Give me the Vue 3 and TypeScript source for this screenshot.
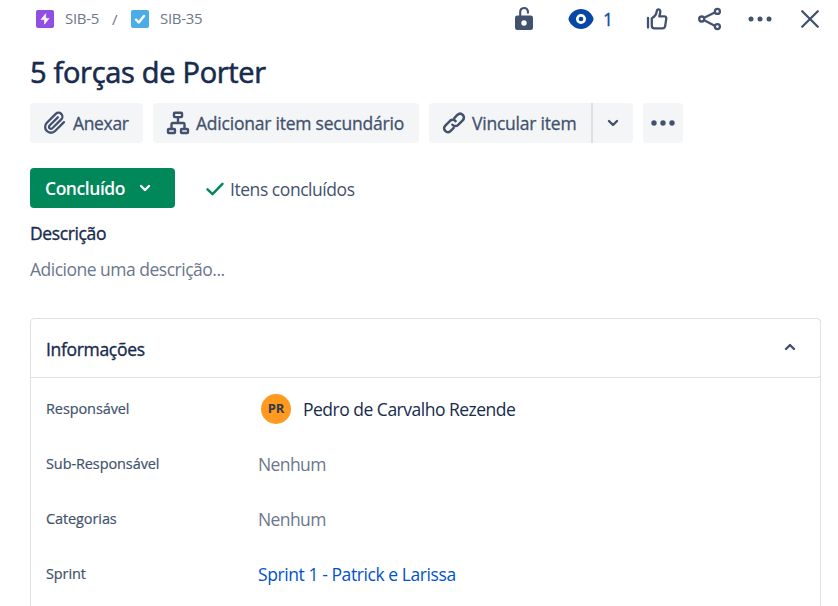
<script setup lang="ts">
import { ref } from 'vue'

interface Field {
  label: string
  value: string
  kind: 'user' | 'empty' | 'link'
}

const open = ref(true)
const fields: Field[] = [
  { label: 'Responsável', value: 'Pedro de Carvalho Rezende', kind: 'user' },
  { label: 'Sub-Responsável', value: 'Nenhum', kind: 'empty' },
  { label: 'Categorias', value: 'Nenhum', kind: 'empty' },
  { label: 'Sprint', value: 'Sprint 1 - Patrick e Larissa', kind: 'link' },
]
</script>

<template>
  <main class="issue">
    <header class="top">
      <nav class="crumbs">
        <svg class="type" viewBox="0 0 18 18"><rect width="18" height="18" rx="2" fill="#904ee2" /><path d="M9.700 3.700 5 9.600h3.500v4.600L13 8.400H9.700z" fill="#fff" stroke="#fff" stroke-width=".6" stroke-linejoin="round" /></svg>
        <a class="key"><span>SIB-5</span></a>
        <span class="slash">/</span>
        <svg class="type" viewBox="0 0 18 18"><rect width="18" height="18" rx="2" fill="#4bade8" /><path d="m5 9.600 2.800 2.900L13 5.900" fill="none" stroke="#fff" stroke-width="2.400" stroke-linecap="round" stroke-linejoin="round" /></svg>
        <a class="key"><span>SIB-35</span></a>
      </nav>
      <div class="tools">
        <svg class="ic lock" viewBox="0 0 30 30"><path d="M11.200 14V7.700a3.900 3.900 0 0 1 7.700-.6v1.600" fill="none" stroke="currentColor" stroke-width="2.100" stroke-linecap="round" /><path fill-rule="evenodd" d="M8.200 11.500h13.600a2.200 2.200 0 0 1 2.200 2.200v10.100a2.200 2.200 0 0 1-2.200 2.200H8.200a2.200 2.200 0 0 1-2.200-2.200v-10.100a2.200 2.200 0 0 1 2.200-2.200zM15 16.300a2.700 2.700 0 1 0 0 5.400 2.700 2.700 0 0 0 0-5.400z" fill="currentColor" /></svg>
        <span class="watch">
          <svg class="ic" viewBox="0 0 30 30"><path d="M15 5c-6 0-10.200 4-12.200 8.400-.5 1.100-.5 2.100 0 3.200C4.800 21 9 25 15 25s10.200-4 12.200-8.400c.5-1.100.5-2.100 0-3.200C25.200 9 21 5 15 5z" fill="currentColor" /><circle cx="15" cy="15" r="3.700" fill="currentColor" stroke="#fff" stroke-width="2.700" /></svg>
          <b>1</b>
        </span>
        <svg class="ic like" viewBox="0 0 30 30"><g fill="none" stroke="currentColor" stroke-width="2.300" stroke-linecap="round" stroke-linejoin="round"><path d="M6 14v9.500" /><path d="M9.800 14.200c2.600-1.200 4.400-3.300 4.900-6.700.2-1.500.8-2.200 1.700-2.200 2 0 2.200 2.300 1.700 4.100l-.8 3h5.200c1.200 0 2 .9 1.800 2l-1.100 7.400c-.2 1.500-1.300 2.500-2.800 2.500h-8c-1.500 0-2.600-1.100-2.600-2.600z" /></g></svg>
        <svg class="ic share" viewBox="0 0 30 30"><g fill="none" stroke="currentColor" stroke-width="2.300"><path d="m9.600 13.600 10.600-5.400M9.600 16.500l10.600 5.400" /><circle cx="6.700" cy="15" r="2.500" /><circle cx="22.400" cy="7.400" r="2.500" /><circle cx="22.400" cy="22.600" r="2.500" /></g></svg>
        <svg class="ic dots" viewBox="0 0 30 30" fill="currentColor"><circle cx="6" cy="15" r="2.500" /><circle cx="15" cy="15" r="2.500" /><circle cx="24" cy="15" r="2.500" /></svg>
        <svg class="ic close" viewBox="0 0 30 30"><path d="m7.200 7.200 15.600 15.600M22.800 7.200 7.200 22.800" fill="none" stroke="currentColor" stroke-width="2.300" stroke-linecap="round" /></svg>
      </div>
    </header>

    <h1><span>5 forças de Porter</span></h1>

    <div class="actions">
      <button class="btn attach">
        <svg class="ic" viewBox="0 0 30 30"><path transform="translate(3.200 3.400) scale(.97)" d="m21.400 11.050-9.150 9.190a6 6 0 0 1-8.490-8.490l9.190-9.190a4 4 0 0 1 5.660 5.660l-9.200 9.190a2 2 0 0 1-2.830-2.830l8.490-8.480" fill="none" stroke="currentColor" stroke-width="2.400" stroke-linecap="round" stroke-linejoin="round" /></svg>
        <span>Anexar</span>
      </button>
      <button class="btn child">
        <svg class="ic" viewBox="0 0 30 30"><g fill="none" stroke="currentColor" stroke-width="2.400" stroke-linejoin="round"><rect x="11" y="4.700" width="8" height="4.400" rx=".8" /><rect x="5" y="21" width="7" height="4" rx=".8" /><rect x="18" y="21" width="7" height="4" rx=".8" /><path d="M15 9.300v5.500M8.500 21v-4.700q0-1.300 1.300-1.300h10.400q1.300 0 1.300 1.300V21" /></g></svg>
        <span>Adicionar item secundário</span>
      </button>
      <div class="split">
        <button class="btn join">
          <svg class="ic" viewBox="0 0 30 30"><g fill="none" stroke="currentColor" stroke-width="2.500" stroke-linecap="round"><path d="M15.300 10.100 18.300 7c3.800-3.700 9 1.700 5.400 5.300l-4.800 4.800c-1.700 1.500-4.100 1.300-5.500-.3" /><path d="m14.700 19.900-3 3c-3.800 3.700-9-1.700-5.400-5.300l4.800-4.800c1.700-1.500 4.100-1.300 5.500.3" /></g></svg>
          <span>Vincular item</span>
        </button>
        <button class="btn drop"><svg class="chev" viewBox="0 0 12 8"><path d="m2 2 4 4 4-4" /></svg></button>
      </div>
      <button class="btn more"><svg class="ic" viewBox="0 0 30 30" fill="currentColor"><circle cx="6" cy="15" r="2.700" /><circle cx="15" cy="15" r="2.700" /><circle cx="24" cy="15" r="2.700" /></svg></button>
    </div>

    <div class="status-row">
      <button class="status"><span>Concluído</span><svg class="chev" viewBox="0 0 12 8"><path d="m2 2 4 4 4-4" /></svg></button>
      <div class="done">
        <svg viewBox="0 0 20 16"><path d="m2.500 8.300 5 4.900 10-10.400" fill="none" stroke="#00875a" stroke-width="2.400" stroke-linecap="round" stroke-linejoin="round" /></svg>
        <span>Itens concluídos</span>
      </div>
    </div>

    <h2><span>Descrição</span></h2>
    <p class="placeholder"><span>Adicione uma descrição...</span></p>

    <section class="panel">
      <div class="panel-head" @click="open = !open">
        <span>Informações</span>
        <svg class="chev" viewBox="0 0 12 8"><path d="m2 6 4-4 4 4" /></svg>
      </div>
      <dl v-if="open" class="fields">
        <div v-for="f in fields" :key="f.label" class="field">
          <dt><span>{{ f.label }}</span></dt>
          <dd :class="f.kind">
            <i v-if="f.kind === 'user'" class="avatar">PR</i>
            <span>{{ f.value }}</span>
          </dd>
        </div>
      </dl>
    </section>
  </main>
</template>

<style>
body { background: #fff; overflow: hidden; }
</style>

<style scoped>
.issue { box-sizing: border-box; width: 838px; height: 606px; overflow: hidden; padding-left: 30px; padding-right: 17px; font-family: "Open Sans", "Noto Sans", sans-serif; font-size: 17.5px; letter-spacing: -.45px; color: #172b4d; }
.issue * { box-sizing: border-box; }
span { white-space: nowrap; }
.ic { width: 30px; height: 30px; flex: none; display: block; }
.chev { width: 12px; height: 8px; flex: none; fill: none; stroke: currentColor; stroke-width: 2.4; stroke-linecap: round; stroke-linejoin: round; }
.top { display: flex; justify-content: space-between; height: 38px; color: #42526e; margin-right: -4px; }
.crumbs { display: flex; align-items: center; padding-left: 6px; color: #6b778c; font-size: 15px; line-height: 20px; }
.type { width: 18px; height: 18px; }
.key { margin-left: 11px; letter-spacing: -.3px; width: 47px; padding-bottom: 2px; }
.slash { width: 19px; }
.tools { display: flex; align-items: center; }
.watch { display: flex; align-items: center; color: #0747a6; margin-left: 27px; width: 76px; }
.watch b { font-weight: 400; -webkit-text-stroke: .3px currentColor; margin-left: 7px; }
.share { margin-left: 23px; }
.dots { margin-left: 20px; }
.close { margin-left: 20px; }
h1 { margin: 14px 0 0; height: 40px; line-height: 40px; font-size: 29px; font-weight: 400; letter-spacing: -.3px; -webkit-text-stroke: .6px currentColor; }
.actions { display: flex; gap: 10px; margin-top: 11px; }
button { border: 0; margin: 0; font: inherit; letter-spacing: inherit; }
.btn { display: flex; align-items: center; height: 40px; background: #f4f5f7; color: #42526e; border-radius: 4px; padding: 0 0 0 10px; gap: 3px; letter-spacing: -.22px; -webkit-text-stroke: .3px currentColor; }
.attach { width: 113px; letter-spacing: -.35px; }
.child { width: 266px; }
.split { display: flex; width: 204px; }
.join { width: 162px; border-radius: 4px 0 0 4px; }
.drop { width: 42px; padding: 0; justify-content: center; border-left: 2px solid #dcdfe5; border-radius: 0 4px 4px 0; }
.more { width: 40px; padding: 0; justify-content: center; }
.status-row { display: flex; align-items: center; margin-top: 25px; height: 40px; }
.status { display: flex; align-items: center; justify-content: space-between; width: 145px; height: 40px; padding: 0 24px 0 15px; background: #00875a; color: #fff; border-radius: 4px; font-weight: 600; }
.done { display: flex; align-items: center; margin-left: 30px; gap: 5px; color: #42526e; padding-top: 2px; }
.done svg { width: 20px; height: 16px; }
h2 { margin: 12px 0 0; height: 26px; line-height: 26px; font-size: 17.5px; font-weight: 400; letter-spacing: -.38px; -webkit-text-stroke: .35px currentColor; }
.placeholder { margin: 10px 0 0; height: 26px; line-height: 26px; color: #6b778c; letter-spacing: -.5px; }
.panel { margin-top: 36px; height: 320px; border: 1px solid #dfe1e6; border-radius: 4px; }
.panel-head { display: flex; align-items: center; justify-content: space-between; height: 59px; margin-right: -1px; padding: 2px 24px 0 15px; border: solid #dfe1e6; border-width: 0 1px 1px 0; border-radius: 0 4px 4px 0; letter-spacing: -.32px; }
.panel-head span { -webkit-text-stroke: .35px currentColor; }
.panel-head .chev { color: #42526e; margin-top: -4px; }
.fields { margin: 0; padding: 3px 0 0 15px; }
.field { display: flex; align-items: center; height: 55px; }
dt { width: 212px; font-size: 14.5px; letter-spacing: -.1px; color: #42526e; -webkit-text-stroke: .2px currentColor; }
dd { margin: 0; display: flex; align-items: center; letter-spacing: -.5px; }
.user { padding-left: 3px; }
.user span { padding-top: 1px; }
.empty { color: #6b778c; letter-spacing: -.6px; }
.link { color: #0052cc; letter-spacing: -.42px; }
.avatar { width: 30px; height: 30px; line-height: 29px; border-radius: 50%; background: #ff991f; color: #333a46; text-align: center; font-size: 13px; font-style: normal; font-weight: 700; letter-spacing: 0; margin-right: 12px; }
</style>
